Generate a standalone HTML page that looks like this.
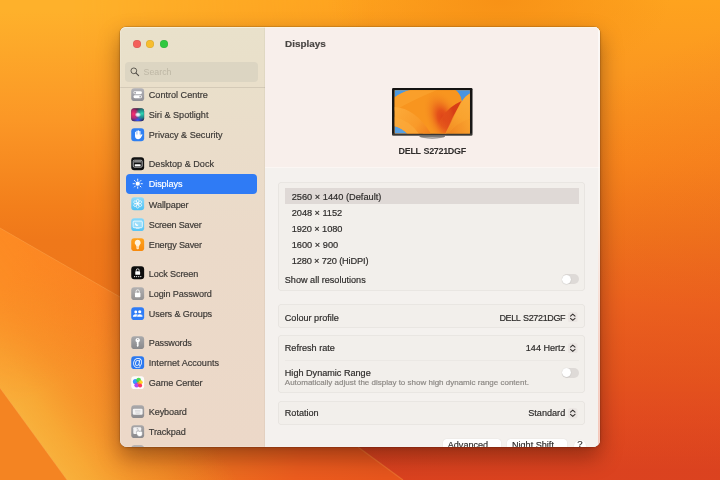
<!DOCTYPE html>
<html lang="en">
<head>
<meta charset="utf-8">
<title>Displays</title>
<style>
html,body{margin:0;padding:0;}
body{width:720px;height:480px;overflow:hidden;position:relative;font-family:"Liberation Sans", sans-serif;font-size:9.1px;color:#2c2a29;background:#f28a1e;-webkit-text-stroke:0.18px;}
#wall{position:absolute;left:0;top:0;width:720px;height:480px;display:block;}
#win{position:absolute;left:120px;top:27px;width:480px;height:419.5px;border-radius:6px 6px 7px 7px;overflow:hidden;will-change:transform;
  box-shadow:0 0 0 0.5px rgba(60,20,0,0.25), 0 10px 22px rgba(30,5,0,0.38), 0 1px 4px rgba(30,5,0,0.14);background:#f4f0ec;}
#win::after{content:'';position:absolute;left:0;top:0;right:0;bottom:0;border-radius:inherit;box-shadow:inset 0 0.7px 0 rgba(255,250,225,0.75), inset 0 0 0 0.5px rgba(255,255,255,0.25);pointer-events:none;}
#side{position:absolute;left:0;top:0;width:144.5px;height:100%;background:linear-gradient(180deg,#e9e1cb 0%,#e9e0ca 8%,#eaddca 27%,#ebdac9 50%,#ecd8c8 100%);}
#main{position:absolute;left:144.5px;top:0;right:0;height:100%;background:#f4f1ee;box-shadow:-0.5px 0 0 rgba(0,0,0,0.07);}
#mainhead{position:absolute;left:0;top:0;right:0;height:140px;background:#f8efeb;border-bottom:1px solid #fbf6f3;}
.tl{position:absolute;top:13.3px;width:8px;height:8px;border-radius:50%;box-shadow:inset 0 0 0 0.5px rgba(0,0,0,0.12);}
#search{position:absolute;left:5.3px;top:35.3px;width:132.6px;height:19.4px;border-radius:4px;background:#dcd5c2;}
#search span{position:absolute;left:18.3px;top:4.9px;font-size:8.8px;color:#beb7a5;line-height:10px;-webkit-text-stroke:0;}
#search svg{position:absolute;left:4.7px;top:5px;}
#sdiv{position:absolute;left:0;top:60px;width:144.5px;height:0.7px;background:rgba(0,0,0,0.09);}
.row{position:absolute;left:11.2px;height:20px;width:130px;white-space:nowrap;}
.row .ic{position:absolute;left:0;top:3.30px;}
.row .lbl{position:absolute;left:17.6px;top:0.36px;line-height:20px;font-size:9.1px;color:#3d3a37;}
.row.sel .lbl{color:#fff;}
.selrow{position:absolute;left:6px;width:131px;height:19.8px;border-radius:4px;background:#2f7bf5;}
#title{position:absolute;left:20.6px;top:9.5px;font-size:9.9px;font-weight:700;line-height:14px;color:#4a4644;}
.panel{position:absolute;left:13.9px;width:306.4px;background:#f2efeb;border-radius:4px;box-shadow:inset 0 0 0 0.8px rgba(0,0,0,0.05);}
.res{position:absolute;left:27.2px;line-height:16px;height:16px;font-size:9.25px;color:#2d2b2a;white-space:nowrap;}
#ressel{position:absolute;left:20.7px;top:161px;width:294.3px;height:15.5px;background:#dfd9d6;}
.lab{position:absolute;left:20.3px;line-height:12px;font-size:9.1px;color:#2d2b2a;white-space:nowrap;}
.val{position:absolute;right:34.8px;line-height:12px;font-size:9.1px;color:#2d2b2a;white-space:nowrap;text-align:right;}
.chev{position:absolute;left:303.8px;margin-top:0.9px;}
.toggle{position:absolute;left:297.4px;width:17.5px;height:10px;border-radius:5px;background:#dedad7;}
.toggle i{position:absolute;left:0.5px;top:0.5px;width:9px;height:9px;border-radius:50%;background:#fff;box-shadow:0 0.3px 1px rgba(0,0,0,0.25);}
.hline{position:absolute;left:20.5px;width:294px;height:0.7px;background:rgba(0,0,0,0.028);}
.btn{position:absolute;top:412.1px;height:14px;border-radius:3.5px;background:#fff;box-shadow:0 0 0 0.5px rgba(0,0,0,0.025),0 0.4px 1px rgba(0,0,0,0.09);font-size:9.1px;line-height:13.6px;text-align:center;color:#2d2b2a;white-space:nowrap;}
</style>
</head>
<body>
<svg id="wall" viewBox="0 0 720 480" width="720" height="480" preserveAspectRatio="none">
<defs>
  <linearGradient id="wbase" x1="0" y1="0" x2="0" y2="1">
    <stop offset="0" stop-color="#fea31e"/>
    <stop offset="0.15" stop-color="#fb9820"/>
    <stop offset="0.34" stop-color="#f98a1c"/>
    <stop offset="0.49" stop-color="#f07a1b"/>
    <stop offset="0.635" stop-color="#ec671e"/>
    <stop offset="0.78" stop-color="#e2561d"/>
    <stop offset="0.85" stop-color="#de4a1f"/>
    <stop offset="0.98" stop-color="#d33a20"/>
  </linearGradient>
  <linearGradient id="wleftcol" x1="0" y1="0" x2="0" y2="1">
    <stop offset="0.02" stop-color="#feb12b"/>
    <stop offset="0.25" stop-color="#fb9726"/>
    <stop offset="0.43" stop-color="#f37f1b"/>
    <stop offset="0.5" stop-color="#ef781a"/>
    <stop offset="1" stop-color="#ee741a"/>
  </linearGradient>
  <linearGradient id="wleftmask" x1="0" y1="0" x2="1" y2="0">
    <stop offset="0" stop-color="#fff"/>
    <stop offset="0.1" stop-color="#fff"/>
    <stop offset="0.52" stop-color="#000"/>
  </linearGradient>
  <linearGradient id="whlm" gradientUnits="userSpaceOnUse" x1="0" y1="290" x2="55" y2="385">
    <stop offset="0" stop-color="#5a5a5a"/><stop offset="1" stop-color="#fff"/>
  </linearGradient>
  <mask id="mhl"><rect width="720" height="480" fill="url(#whlm)"/></mask>
  <mask id="mleft"><rect width="720" height="480" fill="url(#wleftmask)"/></mask>
  <linearGradient id="wright" gradientUnits="userSpaceOnUse" x1="610" y1="80" x2="730" y2="330">
    <stop offset="0" stop-color="#e8501e" stop-opacity="0"/>
    <stop offset="1" stop-color="#e8501e" stop-opacity="0.38"/>
  </linearGradient>
  <linearGradient id="wband" gradientUnits="userSpaceOnUse" x1="0" y1="300" x2="400" y2="420">
    <stop offset="0" stop-color="#fe8822"/>
    <stop offset="0.25" stop-color="#f98223"/>
    <stop offset="0.5" stop-color="#ee7a20"/>
    <stop offset="0.8" stop-color="#ec5c1e"/>
    <stop offset="1" stop-color="#e8561d"/>
  </linearGradient>
  <linearGradient id="whl" gradientUnits="userSpaceOnUse" x1="30" y1="429" x2="143" y2="346.5">
    <stop offset="0" stop-color="#f8b03c" stop-opacity="1"/>
    <stop offset="0.16" stop-color="#f7aa36" stop-opacity="0.95"/>
    <stop offset="0.42" stop-color="#f5a030" stop-opacity="0.62"/>
    <stop offset="0.7" stop-color="#f49c2d" stop-opacity="0.3"/>
    <stop offset="1" stop-color="#f39a2c" stop-opacity="0"/>
  </linearGradient>
  <radialGradient id="wtopc" gradientUnits="userSpaceOnUse" cx="500" cy="0" r="170" gradientTransform="translate(500 0) scale(1 0.5) translate(-500 0)">
    <stop offset="0" stop-color="#f79015" stop-opacity="0.9"/>
    <stop offset="1" stop-color="#f79015" stop-opacity="0"/>
  </radialGradient>
  <linearGradient id="wedge" gradientUnits="userSpaceOnUse" x1="0" y1="228" x2="-8" y2="242">
    <stop offset="0" stop-color="#ffb04a" stop-opacity="0.55"/>
    <stop offset="1" stop-color="#ffb04a" stop-opacity="0"/>
  </linearGradient>
</defs>
<rect width="720" height="480" fill="url(#wbase)"/>
<rect width="720" height="480" fill="url(#wright)"/>
<rect width="720" height="480" fill="url(#wleftcol)" mask="url(#mleft)"/>
<rect width="720" height="90" fill="url(#wtopc)"/>
<path d="M0 228 L120 297 L358 447 L403 480 L67 480 L0 388 Z" fill="url(#wband)"/>
<path d="M0 228 L120 297 L358 447 L403 480 L67 480 L0 388 Z" fill="url(#whl)" mask="url(#mhl)"/>
<path d="M0 388 L67 480 L0 480 Z" fill="#f48422"/>
<path d="M0 228 L120 297" stroke="#ffb45e" stroke-opacity="0.35" stroke-width="1" fill="none"/>
<path d="M0 388 L67 480" stroke="#ffc266" stroke-opacity="0.35" stroke-width="1" fill="none"/>
<path d="M358 447 L403 480" stroke="#f58a3a" stroke-opacity="0.5" stroke-width="1.2" fill="none"/>
</svg>

<div id="win">
  <div id="side">
    <div class="tl" style="left:12.8px;background:#f4605a"></div>
    <div class="tl" style="left:26.4px;background:#f7bd2e"></div>
    <div class="tl" style="left:39.9px;background:#2fc840"></div>
    <div id="search"><svg viewBox="0 0 20 20" width="9.6" height="9.6"><circle cx="8" cy="8" r="6" fill="none" stroke="#4f4b45" stroke-width="1.8"/><path d="M12.6 12.6 L18 18" stroke="#4f4b45" stroke-width="2.2" stroke-linecap="round"/></svg><span>Search</span></div>
    <div id="sdiv"></div>
    <div class="row" style="top:57.80px"><svg class="ic" viewBox="0 0 27 27" width="13.4" height="13.4"><defs><linearGradient id="gcc" x1="0" y1="0" x2="0" y2="1"><stop offset="0" stop-color="#b4b4b9"/><stop offset="1" stop-color="#8f8f95"/></linearGradient></defs><rect x="0.5" y="0.5" width="26" height="26" rx="6" fill="url(#gcc)"/><rect x="5" y="6.5" width="17" height="6" rx="3" fill="#fff"/><circle cx="8.3" cy="9.5" r="1.9" fill="#a2a2a7"/><rect x="5" y="14.5" width="17" height="6" rx="3" fill="#fff"/><circle cx="18.7" cy="17.5" r="1.9" fill="#a2a2a7"/></svg><span class="lbl" style="letter-spacing:0px">Control Centre</span></div>
<div class="row" style="top:77.95px"><svg class="ic" viewBox="0 0 27 27" width="13.4" height="13.4"><defs><radialGradient id="gs1" cx="0.18" cy="0.45" r="0.55"><stop offset="0" stop-color="#ff2f72"/><stop offset="0.55" stop-color="#e02a78" stop-opacity="0.75"/><stop offset="1" stop-color="#c02a90" stop-opacity="0"/></radialGradient><radialGradient id="gs2" cx="0.82" cy="0.42" r="0.5"><stop offset="0" stop-color="#2fe0b8"/><stop offset="0.55" stop-color="#22b8a8" stop-opacity="0.7"/><stop offset="1" stop-color="#2fd6b4" stop-opacity="0"/></radialGradient><radialGradient id="gs3" cx="0.5" cy="0.9" r="0.5"><stop offset="0" stop-color="#3557ff"/><stop offset="1" stop-color="#3b5bff" stop-opacity="0"/></radialGradient><radialGradient id="gs4" cx="0.5" cy="0.5" r="0.5"><stop offset="0" stop-color="#fff"/><stop offset="0.45" stop-color="#eef2ff" stop-opacity="0.85"/><stop offset="1" stop-color="#fff" stop-opacity="0"/></radialGradient><clipPath id="csiri"><rect x="0.5" y="0.5" width="26" height="26" rx="6"/></clipPath></defs><rect x="0.5" y="0.5" width="26" height="26" rx="6" fill="#1b1830"/><g clip-path="url(#csiri)"><rect x="0" y="0" width="27" height="27" fill="url(#gs3)"/><rect x="0" y="0" width="27" height="27" fill="url(#gs1)"/><rect x="0" y="0" width="27" height="27" fill="url(#gs2)"/><ellipse cx="14" cy="13.5" rx="6.5" ry="5.2" fill="url(#gs4)"/></g></svg><span class="lbl" style="letter-spacing:0px">Siri &amp; Spotlight</span></div>
<div class="row" style="top:98.10px"><svg class="ic" viewBox="0 0 27 27" width="13.4" height="13.4"><rect x="0.5" y="0.5" width="26" height="26" rx="6" fill="#2f80f2"/><g fill="#fff"><rect x="8.2" y="7.6" width="2.5" height="9" rx="1.25"/><rect x="11" y="5.2" width="2.5" height="11" rx="1.25"/><rect x="13.8" y="4.6" width="2.5" height="11" rx="1.25"/><rect x="16.6" y="6" width="2.5" height="10" rx="1.25"/><path d="M8.2 13 H19.1 V15.5 l1.7 -2.6 a1.25 1.25 0 0 1 2.1 1.3 l-3 5.6 q-1.6 3 -5.4 3 q-5.5 0 -6.3 -5.6z"/></g></svg><span class="lbl" style="letter-spacing:0px">Privacy &amp; Security</span></div>
<div class="row" style="top:126.85px"><svg class="ic" viewBox="0 0 27 27" width="13.4" height="13.4"><rect x="0.5" y="0.5" width="26" height="26" rx="6" fill="#111"/><rect x="4.5" y="6.5" width="18" height="14" rx="2.2" fill="none" stroke="#d9d9d9" stroke-width="1.6"/><rect x="6.2" y="8.2" width="14.6" height="3" fill="#8a8a8a"/><rect x="7.5" y="14.5" width="12" height="4" rx="1" fill="#fff"/></svg><span class="lbl" style="letter-spacing:0px">Desktop &amp; Dock</span></div>
<div class="selrow" style="top:147.00px"></div>
<div class="row sel" style="top:147.00px"><svg class="ic" viewBox="0 0 27 27" width="13.4" height="13.4"><rect x="0.5" y="0.5" width="26" height="26" rx="6" fill="#2f7cf6"/><circle cx="13.5" cy="13.5" r="4.3" fill="#fff"/><line x1="13.5" y1="4.2" x2="13.5" y2="6.8" stroke="#fff" stroke-width="1.8" stroke-linecap="round" transform="rotate(0 13.5 13.5)"/><line x1="13.5" y1="4.2" x2="13.5" y2="6.8" stroke="#fff" stroke-width="1.8" stroke-linecap="round" transform="rotate(45 13.5 13.5)"/><line x1="13.5" y1="4.2" x2="13.5" y2="6.8" stroke="#fff" stroke-width="1.8" stroke-linecap="round" transform="rotate(90 13.5 13.5)"/><line x1="13.5" y1="4.2" x2="13.5" y2="6.8" stroke="#fff" stroke-width="1.8" stroke-linecap="round" transform="rotate(135 13.5 13.5)"/><line x1="13.5" y1="4.2" x2="13.5" y2="6.8" stroke="#fff" stroke-width="1.8" stroke-linecap="round" transform="rotate(180 13.5 13.5)"/><line x1="13.5" y1="4.2" x2="13.5" y2="6.8" stroke="#fff" stroke-width="1.8" stroke-linecap="round" transform="rotate(225 13.5 13.5)"/><line x1="13.5" y1="4.2" x2="13.5" y2="6.8" stroke="#fff" stroke-width="1.8" stroke-linecap="round" transform="rotate(270 13.5 13.5)"/><line x1="13.5" y1="4.2" x2="13.5" y2="6.8" stroke="#fff" stroke-width="1.8" stroke-linecap="round" transform="rotate(315 13.5 13.5)"/></svg><span class="lbl" style="letter-spacing:-0.1px">Displays</span></div>
<div class="row" style="top:167.15px"><svg class="ic" viewBox="0 0 27 27" width="13.4" height="13.4"><defs><linearGradient id="gwp" x1="0" y1="0" x2="0" y2="1"><stop offset="0" stop-color="#8fdcfb"/><stop offset="1" stop-color="#4fc1f3"/></linearGradient></defs><rect x="0.5" y="0.5" width="26" height="26" rx="6" fill="url(#gwp)"/><ellipse cx="13.5" cy="8.2" rx="2.7" ry="3.6" fill="none" stroke="#fff" stroke-width="1.3" transform="rotate(0 13.5 13.5)"/><ellipse cx="13.5" cy="8.2" rx="2.7" ry="3.6" fill="none" stroke="#fff" stroke-width="1.3" transform="rotate(60 13.5 13.5)"/><ellipse cx="13.5" cy="8.2" rx="2.7" ry="3.6" fill="none" stroke="#fff" stroke-width="1.3" transform="rotate(120 13.5 13.5)"/><ellipse cx="13.5" cy="8.2" rx="2.7" ry="3.6" fill="none" stroke="#fff" stroke-width="1.3" transform="rotate(180 13.5 13.5)"/><ellipse cx="13.5" cy="8.2" rx="2.7" ry="3.6" fill="none" stroke="#fff" stroke-width="1.3" transform="rotate(240 13.5 13.5)"/><ellipse cx="13.5" cy="8.2" rx="2.7" ry="3.6" fill="none" stroke="#fff" stroke-width="1.3" transform="rotate(300 13.5 13.5)"/><circle cx="13.5" cy="13.5" r="1.8" fill="#fff"/></svg><span class="lbl" style="letter-spacing:-0.1px">Wallpaper</span></div>
<div class="row" style="top:187.30px"><svg class="ic" viewBox="0 0 27 27" width="13.4" height="13.4"><defs><linearGradient id="gss" x1="0" y1="0" x2="0" y2="1"><stop offset="0" stop-color="#86d8fb"/><stop offset="1" stop-color="#57c4f4"/></linearGradient></defs><rect x="0.5" y="0.5" width="26" height="26" rx="6" fill="url(#gss)"/><rect x="4.2" y="6.2" width="18.6" height="13.4" rx="1.8" fill="#ffffff" fill-opacity="0.28" stroke="#fff" stroke-width="1.6"/><path d="M10.2 9.2 a3.6 3.6 0 1 0 5 4.4 a3.9 3.9 0 0 1 -5 -4.4z" fill="#fff"/><rect x="9.5" y="20.8" width="8" height="1.2" rx="0.6" fill="#fff" opacity="0.75"/></svg><span class="lbl" style="letter-spacing:-0.2px">Screen Saver</span></div>
<div class="row" style="top:207.45px"><svg class="ic" viewBox="0 0 27 27" width="13.4" height="13.4"><defs><linearGradient id="ges" x1="0" y1="0" x2="0" y2="1"><stop offset="0" stop-color="#ffa31c"/><stop offset="1" stop-color="#f7890d"/></linearGradient></defs><rect x="0.5" y="0.5" width="26" height="26" rx="6" fill="url(#ges)"/><path d="M13.5 3.4 a6 6 0 0 1 3.9 10.6 q-1.1 1.1 -1.2 3 v3.2 a2.7 2.7 0 0 1 -5.4 0 v-3.2 q-0.1 -1.9 -1.2 -3 a6 6 0 0 1 3.9 -10.6z" fill="#fff2dc"/><rect x="10.8" y="17.6" width="5.4" height="0.9" fill="#f9a23a" opacity="0.8"/><rect x="10.8" y="19.6" width="5.4" height="0.9" fill="#f9a23a" opacity="0.8"/></svg><span class="lbl" style="letter-spacing:-0.17px">Energy Saver</span></div>
<div class="row" style="top:236.20px"><svg class="ic" viewBox="0 0 27 27" width="13.4" height="13.4"><rect x="0.5" y="0.5" width="26" height="26" rx="6" fill="#0c0c0c"/><path d="M10.6 11 V8.6 a2.9 2.9 0 0 1 5.8 0 V11" fill="none" stroke="#fff" stroke-width="1.6"/><rect x="8.6" y="10.6" width="9.8" height="7.2" rx="1.4" fill="#fff"/><circle cx="7.3" cy="21.3" r="1.25" fill="#fff"/><circle cx="11.4" cy="21.3" r="1.25" fill="#fff"/><circle cx="15.6" cy="21.3" r="1.25" fill="#fff"/><circle cx="19.7" cy="21.3" r="1.25" fill="#fff"/></svg><span class="lbl" style="letter-spacing:-0.1px">Lock Screen</span></div>
<div class="row" style="top:256.35px"><svg class="ic" viewBox="0 0 27 27" width="13.4" height="13.4"><defs><linearGradient id="glp" x1="0" y1="0" x2="0" y2="1"><stop offset="0" stop-color="#b3b1b1"/><stop offset="1" stop-color="#939192"/></linearGradient></defs><rect x="0.5" y="0.5" width="26" height="26" rx="6" fill="url(#glp)"/><path d="M10.2 12 V9 a3.3 3.3 0 0 1 6.6 0 V12" fill="none" stroke="#fff" stroke-width="1.7"/><rect x="8" y="11.4" width="11" height="9.4" rx="1.5" fill="#fff"/></svg><span class="lbl" style="letter-spacing:-0.12px">Login Password</span></div>
<div class="row" style="top:276.50px"><svg class="ic" viewBox="0 0 27 27" width="13.4" height="13.4"><rect x="0.5" y="0.5" width="26" height="26" rx="6" fill="#2f7cf6"/><circle cx="9.6" cy="10" r="2.9" fill="#fff"/><path d="M3.8 19.8 q0 -5.4 5.8 -5.4 q3 0 4.4 1.6 q-1.7 1.5 -1.7 3.8z" fill="#fff"/><circle cx="17.6" cy="9.6" r="3.2" fill="#fff"/><path d="M11.4 20.2 q0 -6 6.2 -6 q6.2 0 6.2 6z" fill="#fff" stroke="#2f7cf6" stroke-width="1"/></svg><span class="lbl" style="letter-spacing:-0.1px">Users &amp; Groups</span></div>
<div class="row" style="top:305.25px"><svg class="ic" viewBox="0 0 27 27" width="13.4" height="13.4"><defs><linearGradient id="gpw" x1="0" y1="0" x2="0" y2="1"><stop offset="0" stop-color="#a9a9ab"/><stop offset="1" stop-color="#88888b"/></linearGradient></defs><rect x="0.5" y="0.5" width="26" height="26" rx="6" fill="url(#gpw)"/><path d="M13.5 3.8 a4.6 4.6 0 0 1 1.8 8.8 V20.2 l-1.8 1.9 l-1.8 -1.9 v-1.3 l1.1 -1.1 l-1.1 -1.1 v-4.1 a4.6 4.6 0 0 1 1.8 -8.8z" fill="#fff"/><circle cx="13.5" cy="6.7" r="1.25" fill="#98989b"/></svg><span class="lbl" style="letter-spacing:-0.17px">Passwords</span></div>
<div class="row" style="top:325.40px"><svg class="ic" viewBox="0 0 27 27" width="13.4" height="13.4"><rect x="0.5" y="0.5" width="26" height="26" rx="6" fill="#2b78f0"/><text x="13.5" y="19.3" text-anchor="middle" font-family="Liberation Sans, sans-serif" font-size="20.5" fill="#fff">@</text></svg><span class="lbl" style="letter-spacing:0px">Internet Accounts</span></div>
<div class="row" style="top:345.55px"><svg class="ic" viewBox="0 0 27 27" width="13.4" height="13.4"><rect x="0.5" y="0.5" width="26" height="26" rx="6" fill="#fdfbfa"/><circle cx="9" cy="11.2" r="5.2" fill="#2a96ff" opacity="0.95"/><circle cx="15.4" cy="8.4" r="4.8" fill="#3fd645" opacity="0.92"/><circle cx="19.6" cy="12.6" r="4" fill="#ffd21f" opacity="0.95"/><circle cx="11.6" cy="18.4" r="4.8" fill="#a838f0" opacity="0.92"/><circle cx="18.4" cy="19" r="4" fill="#ff2d55" opacity="0.95"/><circle cx="15" cy="14.2" r="2.6" fill="#ff7a1a" opacity="0.8"/></svg><span class="lbl" style="letter-spacing:-0.08px">Game Center</span></div>
<div class="row" style="top:374.30px"><svg class="ic" viewBox="0 0 27 27" width="13.4" height="13.4"><defs><linearGradient id="gkb" x1="0" y1="0" x2="0" y2="1"><stop offset="0" stop-color="#aaa9ab"/><stop offset="1" stop-color="#8b8a8d"/></linearGradient></defs><rect x="0.5" y="0.5" width="26" height="26" rx="6" fill="url(#gkb)"/><rect x="3.6" y="7.4" width="19.8" height="12.2" rx="2.4" fill="#f4f3f3"/><rect x="8" y="11" width="11" height="1.2" fill="#c9c8ca"/><rect x="8" y="13.4" width="11" height="1.2" fill="#c9c8ca"/><rect x="9.5" y="15.9" width="8" height="1.2" fill="#c9c8ca"/></svg><span class="lbl" style="letter-spacing:-0.12px">Keyboard</span></div>
<div class="row" style="top:394.45px"><svg class="ic" viewBox="0 0 27 27" width="13.4" height="13.4"><defs><linearGradient id="gtp" x1="0" y1="0" x2="0" y2="1"><stop offset="0" stop-color="#a8a7a9"/><stop offset="1" stop-color="#8a898c"/></linearGradient></defs><rect x="0.5" y="0.5" width="26" height="26" rx="6" fill="url(#gtp)"/><rect x="4.6" y="4.6" width="16" height="13.4" rx="2" fill="#f3f2f2"/><path d="M11.5 8.3 a1.3 1.3 0 0 1 2.6 0 V13" fill="none" stroke="#9b9a9d" stroke-width="1.2"/><path d="M11 16.5 v-3.2 a1.5 1.5 0 0 1 3 0 v-0.2 a1.5 1.5 0 0 1 3 0 v0.3 a1.5 1.5 0 0 1 3 0 v0.5 a1.4 1.4 0 0 1 2.8 0 V19 q0 4.2 -5.2 4.2 q-3.6 0 -5.3 -3.2z" fill="#fff" stroke="#8f8e91" stroke-width="0.9"/></svg><span class="lbl" style="letter-spacing:-0.08px">Trackpad</span></div>
<div class="row" style="top:414.60px"><svg class="ic" viewBox="0 0 27 27" width="13.4" height="13.4"><defs><linearGradient id="gpr" x1="0" y1="0" x2="0" y2="1"><stop offset="0" stop-color="#aaa9ab"/><stop offset="1" stop-color="#8b8a8d"/></linearGradient></defs><rect x="0.5" y="0.5" width="26" height="26" rx="6" fill="url(#gpr)"/></svg><span class="lbl" style="letter-spacing:0px">Printers &amp; Scanners</span></div>
  </div>
  <div id="main">
    <div id="mainhead"></div>
    <div style="position:absolute;right:0;top:0;width:2px;height:100%;background:linear-gradient(180deg,rgba(255,255,255,0.55) 0%,rgba(255,250,245,0.5) 45%,rgba(248,185,165,0.55) 75%,rgba(245,170,150,0.6) 100%);"></div>
    <div id="title">Displays</div>
    <svg id="mon" viewBox="0 0 161 103" width="80.5" height="51.5" style="position:absolute;left:127.9px;top:60.6px">
<defs>
  <linearGradient id="mbg" x1="0" y1="0" x2="1" y2="1">
    <stop offset="0" stop-color="#fba52e"/><stop offset="0.5" stop-color="#f7921f"/><stop offset="1" stop-color="#f9a030"/>
  </linearGradient>
  <radialGradient id="mcore" gradientUnits="userSpaceOnUse" cx="103" cy="62" r="62" gradientTransform="translate(103 62) rotate(-24) scale(0.56 1) translate(-103 -62)">
    <stop offset="0" stop-color="#dc4018"/><stop offset="0.3" stop-color="#e4501a" stop-opacity="0.97"/><stop offset="0.62" stop-color="#f07a1d" stop-opacity="0.7"/><stop offset="1" stop-color="#f7921f" stop-opacity="0"/>
  </radialGradient>
  <linearGradient id="mpl" gradientUnits="userSpaceOnUse" x1="5" y1="40" x2="80" y2="95">
    <stop offset="0" stop-color="#fcab3a"/><stop offset="0.6" stop-color="#f99a29"/><stop offset="1" stop-color="#f07a1c"/>
  </linearGradient>
  <linearGradient id="mpr" gradientUnits="userSpaceOnUse" x1="110" y1="91" x2="156" y2="20">
    <stop offset="0" stop-color="#f28a20"/><stop offset="0.5" stop-color="#f9a32f"/><stop offset="1" stop-color="#fbab38"/>
  </linearGradient>
  <linearGradient id="mpr2" gradientUnits="userSpaceOnUse" x1="112" y1="91" x2="156" y2="70">
    <stop offset="0" stop-color="#f08420"/><stop offset="1" stop-color="#f9a22e"/>
  </linearGradient>
  <linearGradient id="mbz" x1="0" y1="0" x2="0" y2="1">
    <stop offset="0" stop-color="#141312"/><stop offset="0.93" stop-color="#1b1a19"/><stop offset="1" stop-color="#4c4946"/>
  </linearGradient>
  <linearGradient id="mwedge" gradientUnits="userSpaceOnUse" x1="126" y1="58" x2="88" y2="70"><stop offset="0" stop-color="#d63a16" stop-opacity="0.95"/><stop offset="0.5" stop-color="#e2501a" stop-opacity="0.6"/><stop offset="1" stop-color="#f07a1d" stop-opacity="0"/></linearGradient>
  <clipPath id="mclip"><rect x="5.2" y="4.3" width="150.6" height="86.9"/></clipPath>
</defs>
<rect x="0" y="0" width="161" height="95.6" rx="2.4" fill="url(#mbz)"/>
<rect x="5.2" y="4.3" width="150.6" height="86.9" fill="url(#mbg)"/>
<g clip-path="url(#mclip)">
  <path d="M5 4 H37 Q22 7 5 19 Z" fill="#4d9ae0"/>
  <path d="M127 4 H156 V11 Q146 16 140 27 Q137 12 127 4Z" fill="#4a94e0"/>
  <path d="M5 76 Q20 80 31 91.5 H5Z" fill="#58a0e2"/>
  <!-- big top petal with red core -->
  <path d="M37 4 H127 Q138 12 139 28 Q126 56 108 91.5 H62 Q40 50 5 45 V19 Q20 8 37 4Z" fill="#f8951f"/>
  <path d="M37 4 H127 Q138 12 139 28 Q126 56 108 91.5 H62 Q40 50 5 45 V19 Q20 8 37 4Z" fill="url(#mcore)"/>
  <path d="M37 4 H90 Q50 20 5 45 V19 Q20 8 37 4Z" fill="#fba733" opacity="0.55"/>
  <path d="M107 91.5 Q122 56 139 26 Q112 38 99 60 Q90 78 84 91.5 Z" fill="url(#mwedge)"/>
  <!-- left lower petal -->
  <path d="M5 38 Q46 40 78 91.5 H31 Q20 80 5 76Z" fill="url(#mpl)"/>
  <path d="M5 58 Q34 64 54 91.5 H31 Q20 80 5 76Z" fill="#fbaa3b" opacity="0.7"/>
  <!-- right petals -->
  <path d="M156 11 V62 Q128 70 112 91.5 H107 Q126 52 140 27 Q146 16 156 11Z" fill="url(#mpr)"/>
  <path d="M156 62 V91.5 H112 Q128 70 156 62Z" fill="url(#mpr2)"/>
  <path d="M107 91.5 Q122 56 140 27" stroke="#fbb040" stroke-width="0.8" fill="none" opacity="0.7"/>
</g>
<path d="M54 95.6 H107 Q102 101.6 80.5 101.6 Q59 101.6 54 95.6Z" fill="#bdb8b5"/>
<path d="M55 96.3 H106" stroke="#2b2827" stroke-width="1.4"/>
<path d="M57 98 Q80.5 103 104 98" stroke="#77726f" stroke-width="1.1" fill="none"/>
</svg>

    <div style="position:absolute;left:0;width:335.5px;top:118.2px;text-align:center;font-weight:700;font-size:9px;letter-spacing:-0.33px;word-spacing:0.7px;line-height:12px;color:#2f2c2b;-webkit-text-stroke:0;">DELL S2721DGF</div>

    <div class="panel" style="top:154.6px;height:109.1px"></div>
    <div id="ressel"></div>
    <div class="res" style="top:161.65px;letter-spacing:0px">2560 × 1440 (Default)</div>
<div class="res" style="top:177.75px;letter-spacing:-0.05px">2048 × 1152</div>
<div class="res" style="top:193.85px;letter-spacing:-0.1px">1920 × 1080</div>
<div class="res" style="top:209.95px;letter-spacing:0px">1600 × 900</div>
<div class="res" style="top:226.05px;letter-spacing:-0.15px">1280 × 720 (HiDPI)</div>

    <div class="lab" style="top:246.8px">Show all resolutions</div>
    <div class="toggle" style="top:247.2px"><i></i></div>

    <div class="panel" style="top:277.4px;height:24px"></div>
    <div class="lab" style="top:284.6px">Colour profile</div>
    <div class="val" style="top:284.6px;letter-spacing:-0.36px;word-spacing:0.8px;font-size:9px">DELL S2721DGF</div>
    <svg class="chev" style="top:283.9px" viewBox="0 0 19 21" width="9.5" height="10.5"><rect x="0" y="0" width="19" height="21" rx="5" fill="#ebe6e3"/><path d="M5 8.2 L9.5 4.2 L14 8.2 M5 12.8 L9.5 16.8 L14 12.8" fill="none" stroke="#353230" stroke-width="2.1" stroke-linecap="round" stroke-linejoin="round"/></svg>

    <div class="panel" style="top:307.5px;height:58.8px"></div>
    <div class="lab" style="top:315.1px">Refresh rate</div>
    <div class="val" style="top:315.1px">144 Hertz</div>
    <svg class="chev" style="top:315.1px" viewBox="0 0 19 21" width="9.5" height="10.5"><rect x="0" y="0" width="19" height="21" rx="5" fill="#ebe6e3"/><path d="M5 8.2 L9.5 4.2 L14 8.2 M5 12.8 L9.5 16.8 L14 12.8" fill="none" stroke="#353230" stroke-width="2.1" stroke-linecap="round" stroke-linejoin="round"/></svg>
    <div class="hline" style="top:333.3px"></div>
    <div class="lab" style="top:339.8px">High Dynamic Range</div>
    <div class="lab" style="top:351.4px;font-size:8px;color:#8c8884;line-height:10px">Automatically adjust the display to show high dynamic range content.</div>
    <div class="toggle" style="top:340.8px"><i></i></div>

    <div class="panel" style="top:373.8px;height:24px"></div>
    <div class="lab" style="top:380.3px">Rotation</div>
    <div class="val" style="top:380.3px">Standard</div>
    <svg class="chev" style="top:380.3px" viewBox="0 0 19 21" width="9.5" height="10.5"><rect x="0" y="0" width="19" height="21" rx="5" fill="#ebe6e3"/><path d="M5 8.2 L9.5 4.2 L14 8.2 M5 12.8 L9.5 16.8 L14 12.8" fill="none" stroke="#353230" stroke-width="2.1" stroke-linecap="round" stroke-linejoin="round"/></svg>

    <div class="btn" style="left:178.5px;width:57.5px">Advanced...</div>
    <div class="btn" style="left:242.5px;width:59.5px">Night Shift...</div>
    <div class="btn" style="left:309.5px;width:12px;border-radius:50%;height:12px;top:412.6px;font-weight:400;font-size:9.6px;line-height:8.6px">?</div>
  </div>
</div>
</body>
</html>
